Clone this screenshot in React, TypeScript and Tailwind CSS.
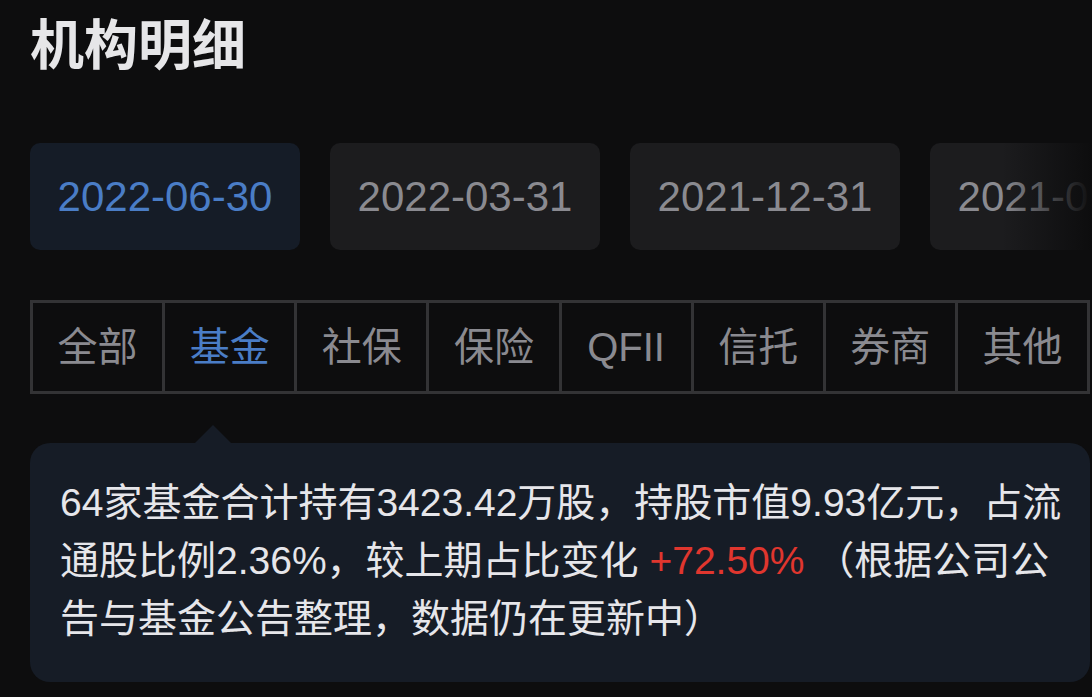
import React from "react";

const dates = ["2022-06-30", "2022-03-31", "2021-12-31", "2021-09-30"];
const tabs = ["全部", "基金", "社保", "保险", "QFII", "信托", "券商", "其他"];

export default function App() {
  return (
    <div
      className="w-[1092px] h-[697px] overflow-hidden bg-[#0d0d0e] pt-[19px]"
      style={{ fontFamily: '"Liberation Sans", "Noto Sans CJK SC", sans-serif' }}
    >
      <h1 className="pl-[30px] text-[54px] leading-[54px] font-bold text-[#e6e6e8]">
        机构明细
      </h1>

      <div className="relative mt-[70px] flex gap-[30px] pl-[30px] overflow-hidden">
        {dates.map((d, i) => (
          <div
            key={d}
            className={
              i === 0
                ? "shrink-0 w-[270px] h-[107px] rounded-[10px] bg-[#151c27] text-[#4a7dc6] flex items-center justify-center text-[42px]"
                : "shrink-0 w-[270px] h-[107px] rounded-[10px] bg-[#1c1c1e] text-[#8a8a90] flex items-center justify-center text-[42px]"
            }
          >
            {d}
          </div>
        ))}
        <div className="absolute right-0 top-0 h-full w-[90px] bg-gradient-to-r from-transparent to-[#0d0d0e]" />
      </div>

      <div className="mt-[50px] ml-[30px] w-[1060px] h-[94px] flex border-[3px] border-[#333335]">
        {tabs.map((t, i) => (
          <div
            key={t}
            className={
              (i > 0 ? "border-l-[3px] border-[#333335] " : "") +
              "flex-1 flex items-center justify-center text-[40px] " +
              (i === 1 ? "text-[#4a7dc6]" : "text-[#8a8a90]")
            }
          >
            {t}
          </div>
        ))}
      </div>

      <div className="relative mt-[49px] ml-[30px] w-[1060px] rounded-[20px] bg-[#161c26] pl-[30px] pr-[20px] pt-[31px] pb-[34px]">
        <div className="absolute top-[-18px] left-[165px] w-0 h-0 border-l-[18px] border-r-[18px] border-b-[18px] border-l-transparent border-r-transparent border-b-[#161c26]" />
        <p className="text-[39px] leading-[58px] text-[#e6e6ea]">
          64家基金合计持有3423.42万股，持股市值9.93亿元，占流通股比例2.36%，较上期占比变化{" "}
          <span className="text-[#e0362e]">+72.50%</span> （根据公司公告与基金公告整理，数据仍在更新中）
        </p>
      </div>
    </div>
  );
}
